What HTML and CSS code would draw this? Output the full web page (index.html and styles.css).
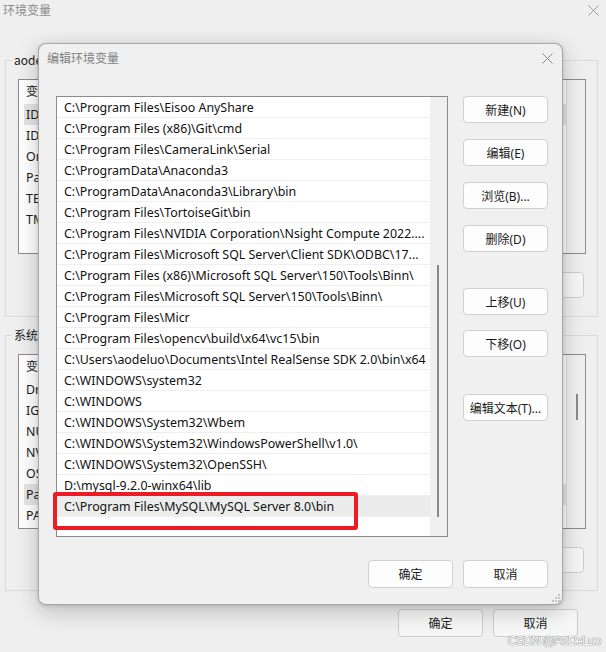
FILE: index.html
```html
<!DOCTYPE html>
<html lang="zh-CN">
<head>
<meta charset="utf-8">
<title>环境变量</title>
<link rel="stylesheet" href="styles.css">
</head>
<body>
<div class="window">
  <div class="win-titlebar">
    <span class="win-title">环境变量</span>
    <svg class="win-close" width="11" height="11" viewBox="0 0 11 11"><path d="M0.5 0.5L10.5 10.5M10.5 0.5L0.5 10.5" stroke="#9a9a9a" stroke-width="1" fill="none"/></svg>
  </div>

  <fieldset class="group">
    <legend>aodeluo 的用户变量(U)</legend>
    <div class="bg-list">
      <div class="bg-main">
        <div class="bg-head">变量</div>
        <div class="bg-row sel">IDEA_HOME</div>
        <div class="bg-row">IDEA_PATH</div>
        <div class="bg-row">OneDrive</div>
        <div class="bg-row">Path</div>
        <div class="bg-row">TEMP</div>
        <div class="bg-row">TMP</div>
      </div>
      <div class="bg-scroll"></div>
    </div>
    <div class="bg-buttons">
      <button class="btn bg-btn">删除(D)</button>
    </div>
  </fieldset>

  <fieldset class="group group-sys">
    <legend>系统变量(S)</legend>
    <div class="bg-list">
      <div class="bg-main">
        <div class="bg-head">变量</div>
        <div class="bg-row">DriverData</div>
        <div class="bg-row">IGCCSVC_DB</div>
        <div class="bg-row">NUMBER_OF_PROCESSORS</div>
        <div class="bg-row">NVCUDASAMPLES_ROOT</div>
        <div class="bg-row">OS</div>
        <div class="bg-row sel">Path</div>
        <div class="bg-row">PATHEXT</div>
      </div>
      <div class="bg-scroll"><div class="bg-thumb"></div></div>
    </div>
    <div class="bg-buttons">
      <button class="btn bg-btn">删除(L)</button>
    </div>
  </fieldset>

  <div class="win-footer">
    <button class="btn bg-btn win-btn">确定</button>
    <button class="btn bg-btn win-btn">取消</button>
  </div>

  <div class="dialog">
    <div class="dlg-titlebar">
      <span class="dlg-title">编辑环境变量</span>
      <svg class="dlg-close" width="11" height="11" viewBox="0 0 11 11"><path d="M0.5 0.5L10.5 10.5M10.5 0.5L0.5 10.5" stroke="#8a8a8a" stroke-width="1" fill="none"/></svg>
    </div>
    <div class="dlg-body">
      <div class="path-list">
        <div class="rows">
          <div class="row">C:\Program Files\Eisoo AnyShare</div>
          <div class="row">C:\Program Files (x86)\Git\cmd</div>
          <div class="row">C:\Program Files\CameraLink\Serial</div>
          <div class="row">C:\ProgramData\Anaconda3</div>
          <div class="row">C:\ProgramData\Anaconda3\Library\bin</div>
          <div class="row">C:\Program Files\TortoiseGit\bin</div>
          <div class="row">C:\Program Files\NVIDIA Corporation\Nsight Compute 2022....</div>
          <div class="row">C:\Program Files\Microsoft SQL Server\Client SDK\ODBC\17...</div>
          <div class="row">C:\Program Files (x86)\Microsoft SQL Server\150\Tools\Binn\</div>
          <div class="row">C:\Program Files\Microsoft SQL Server\150\Tools\Binn\</div>
          <div class="row">C:\Program Files\Micr</div>
          <div class="row">C:\Program Files\opencv\build\x64\vc15\bin</div>
          <div class="row">C:\Users\aodeluo\Documents\Intel RealSense SDK 2.0\bin\x64</div>
          <div class="row">C:\WINDOWS\system32</div>
          <div class="row">C:\WINDOWS</div>
          <div class="row">C:\WINDOWS\System32\Wbem</div>
          <div class="row">C:\WINDOWS\System32\WindowsPowerShell\v1.0\</div>
          <div class="row">C:\WINDOWS\System32\OpenSSH\</div>
          <div class="row">D:\mysql-9.2.0-winx64\lib</div>
          <div class="row selected">C:\Program Files\MySQL\MySQL Server 8.0\bin</div>
        </div>
        <div class="vscroll"><div class="thumb"></div></div>
      </div>
      <div class="btn-col">
        <button class="btn dlg-btn">新建(N)</button>
        <button class="btn dlg-btn">编辑(E)</button>
        <button class="btn dlg-btn">浏览(B)...</button>
        <button class="btn dlg-btn">删除(D)</button>
        <button class="btn dlg-btn gap-up">上移(U)</button>
        <button class="btn dlg-btn gap-down">下移(O)</button>
        <button class="btn dlg-btn gap-text">编辑文本(T)...</button>
      </div>
    </div>
    <div class="dlg-footer">
      <button class="btn dlg-btn foot-btn">确定</button>
      <button class="btn dlg-btn foot-btn">取消</button>
    </div>
    <div class="highlight"></div>
    <svg class="grip" width="10" height="10" viewBox="0 0 10 10">
      <rect x="7" y="1" width="2" height="2" fill="#c4c4c4"/>
      <rect x="4" y="4" width="2" height="2" fill="#c4c4c4"/>
      <rect x="7" y="4" width="2" height="2" fill="#c4c4c4"/>
      <rect x="1" y="7" width="2" height="2" fill="#c4c4c4"/>
      <rect x="4" y="7" width="2" height="2" fill="#c4c4c4"/>
      <rect x="7" y="7" width="2" height="2" fill="#c4c4c4"/>
    </svg>
  </div>

  <div class="watermark">CSDN @AoDeLuo</div>
</div>
</body>
</html>
```

FILE: styles.css
```css
* { box-sizing: border-box; }

html, body {
  margin: 0;
  padding: 0;
}

body {
  font-family: "Noto Sans", "Noto Sans CJK SC", sans-serif;
  font-size: 12px;
  color: #1a1a1a;
}

.window {
  position: relative;
  width: 606px;
  height: 652px;
  overflow: hidden;
  background: #efefef;
}

/* background window */
.win-titlebar {
  height: 30px;
  display: flex;
  align-items: flex-start;
  padding: 2px 7px 0 3px;
}

.win-title {
  font-family: "Noto Sans CJK SC", sans-serif;
  font-size: 12px;
  line-height: 16px;
  color: #8c8c8c;
}

.win-close {
  margin-left: auto;
  margin-top: 3px;
}

.group {
  margin: 22px 8px 0 5px;
  padding: 11px 11px 18px 12px;
  border: 1px solid #dadada;
  min-width: 0;
}

.group-sys {
  margin-top: 10px;
  padding-bottom: 17px;
}

.group legend {
  font-family: "Noto Sans CJK SC", sans-serif;
  font-size: 12px;
  line-height: 16px;
  padding: 0 2px;
  margin-left: -6px;
  color: #1a1a1a;
}

.bg-list {
  height: 175px;
  border: 1px solid #8c8c8c;
  background: #ffffff;
  display: flex;
}

.bg-main {
  flex: 1;
  overflow: hidden;
}

.bg-head {
  height: 24px;
  line-height: 22px;
  padding-left: 7px;
  font-family: "Noto Sans CJK SC", sans-serif;
  font-size: 12px;
}

.bg-row {
  height: 21px;
  line-height: 21px;
  margin-left: 5px;
  padding-left: 2px;
  font-size: 12.4px;
  white-space: nowrap;
}

.bg-row.sel {
  background: #e5e5e5;
}

.bg-scroll {
  width: 19px;
  background: #f0f0f0;
  border-left: 1px solid #dedede;
}

.bg-thumb {
  width: 2px;
  height: 26px;
  margin: 39px 0 0 9px;
  background: #8a8a8a;
}

.bg-buttons {
  display: flex;
  justify-content: flex-end;
  margin: 18px 2px 0 0;
}

.btn {
  font-family: "Noto Sans", "Noto Sans CJK SC", sans-serif;
  font-size: 12px;
  color: #1a1a1a;
  border: 1px solid #d0d0d0;
  border-radius: 4px;
  background: #fdfdfd;
  padding: 0;
  margin: 0;
  width: 85px;
}

.bg-btn {
  height: 26px;
  background: #f6f6f6;
  border-color: #cdcdcd;
}

.win-footer {
  display: flex;
  justify-content: flex-end;
  gap: 10px;
  margin-top: 18px;
  padding-right: 28px;
}

.win-btn {
  height: 28px;
}

/* dialog */
.dialog {
  position: absolute;
  left: 38px;
  top: 43px;
  width: 525px;
  height: 562px;
  background: #f0f0f0;
  border: 1px solid rgba(0, 0, 0, 0.3);
  border-radius: 8px;
  box-shadow: 0 6px 22px rgba(0, 0, 0, 0.22), 0 1px 4px rgba(0, 0, 0, 0.12);
}

.dlg-titlebar {
  height: 52px;
  display: flex;
  align-items: flex-start;
  padding: 6px 9px 0 8px;
}

.dlg-title {
  font-family: "Noto Sans CJK SC", sans-serif;
  font-size: 12px;
  line-height: 16px;
  color: #808080;
}

.dlg-close {
  margin-left: auto;
  margin-top: 3px;
}

.dlg-body {
  display: flex;
  padding-left: 17px;
}

.path-list {
  width: 392px;
  height: 441px;
  border: 1px solid #8c8c8c;
  background: #ffffff;
  display: flex;
}

.rows {
  flex: 1;
  overflow: hidden;
}

.row {
  height: 21px;
  line-height: 21px;
  padding-left: 7px;
  border-bottom: 1px solid #efefef;
  white-space: nowrap;
  overflow: hidden;
  font-size: 12.4px;
  color: #111111;
}

.row.selected {
  background: #ececec;
}

.vscroll {
  width: 17px;
  background: #f0f0f0;
}

.thumb {
  width: 2px;
  height: 252px;
  margin: 168px 0 0 7px;
  background: #8a8a8a;
}

.btn-col {
  display: flex;
  flex-direction: column;
  margin-left: 15px;
  gap: 16px;
}

.dlg-btn {
  height: 27px;
}

.gap-up { margin-top: 20px; }
.gap-down { margin-top: -1px; }
.gap-text { margin-top: 21px; }

.dlg-footer {
  display: flex;
  justify-content: flex-end;
  gap: 10px;
  margin-top: 23px;
  padding-right: 14px;
}

.foot-btn {
  height: 28px;
}

.highlight {
  position: absolute;
  left: 14px;
  top: 448px;
  width: 305px;
  height: 38px;
  border: 4px solid #ec1c24;
  border-radius: 3px;
}

.grip {
  position: absolute;
  right: 1px;
  bottom: 1px;
}

.watermark {
  position: absolute;
  right: 6px;
  bottom: 3px;
  font-family: "Liberation Sans", sans-serif;
  font-size: 13px;
  letter-spacing: -1.2px;
  line-height: 16px;
  color: #ffffff;
  text-shadow: 0 0 1px #6e6e6e, 0 0 1px #6e6e6e;
}
```
